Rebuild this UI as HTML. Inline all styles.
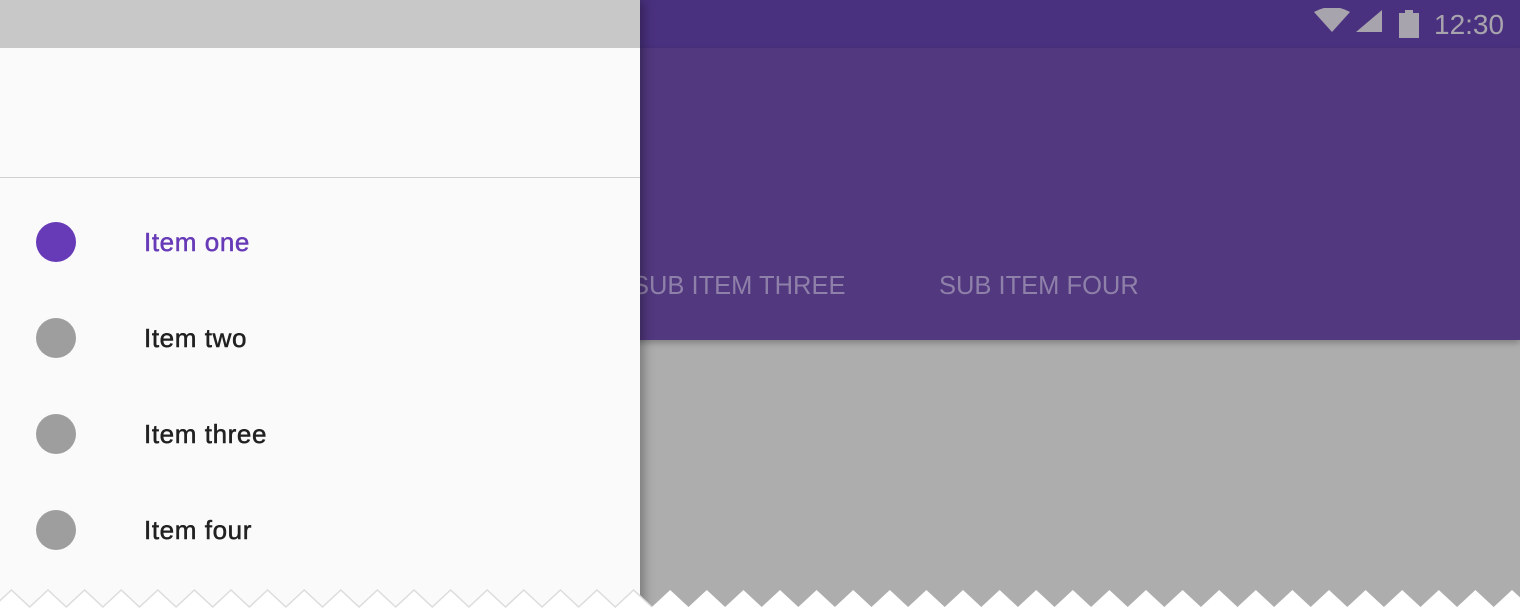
<!DOCTYPE html>
<html><head><style>
body{margin:0;width:1520px;height:610px;overflow:hidden;position:relative;background:#fff;font-family:"Liberation Sans",sans-serif}
.abs{position:absolute}
.item{position:absolute;left:144px;font-size:26px;color:#212121;line-height:30px;letter-spacing:0.6px;-webkit-text-stroke:0.5px currentColor}
.dot{position:absolute;left:36px;width:40px;height:40px;border-radius:50%;background:#9e9e9e}
</style></head><body>
<div class="abs" style="left:0;top:0;width:1520px;height:610px;background:#adadad"></div>
<div class="abs" style="left:0;top:0;width:1520px;height:48px;background:#4a317f"></div>
<div class="abs" style="left:0;top:48px;width:1520px;height:292px;background:#52387f;box-shadow:0 3px 6px rgba(0,0,0,.25)"></div>
<svg class="abs" style="left:1312px;top:8px" width="200" height="32">
<path d="M2 4 Q20 -6 38 4 L20 24 Z" fill="#a8a4ad"/>
<path d="M44 24 L70 24 L70 2 Z" fill="#a8a4ad"/>
<rect x="87" y="5" width="20" height="25" fill="#a8a4ad"/><rect x="93" y="2" width="8" height="4" fill="#a8a4ad"/>
<text x="122" y="26" font-family="Liberation Sans" font-size="28" fill="#a8a4ad">12:30</text>
</svg>
<div class="abs" style="left:632px;top:272px;font-size:25.5px;color:#8f80a9">SUB ITEM THREE</div>
<div class="abs" style="left:939px;top:272px;font-size:25.5px;color:#8f80a9">SUB ITEM FOUR</div>
<div class="abs" style="left:0;top:0;width:640px;height:610px;background:#fafafa;box-shadow:4px 0 10px rgba(0,0,0,.3)"></div>
<div class="abs" style="left:0;top:0;width:640px;height:48px;background:#c8c8c8"></div>
<div class="abs" style="left:0;top:177px;width:640px;height:1px;background:#d0d0d0"></div>
<div class="dot" style="top:222px;background:#673ab7"></div>
<div class="item" style="top:227px;color:#673ab7">Item one</div>
<div class="dot" style="top:318px"></div><div class="item" style="top:323px">Item two</div>
<div class="dot" style="top:414px"></div><div class="item" style="top:419px">Item three</div>
<div class="dot" style="top:510px"></div><div class="item" style="top:515px">Item four</div>
<svg class="abs" style="left:0;top:586px" width="1520" height="24">
<polygon id="z" fill="#fff" stroke="none" points=""/>
<polyline id="zl" fill="none" stroke="#dcdcdc" stroke-width="1.5" points=""/>
</svg>
<script>
var pts=[],lp=[];var p=36.6,o=597%36.6;
for(var x=o-p;x<1560;x+=p){pts.push(x+','+4);pts.push((x+p/2)+','+21);if(x<=650)lp.push(x+','+4,(x+p/2)+','+21);}
document.getElementById('z').setAttribute('points',pts.join(' ')+' 1560,24 -40,24');
document.getElementById('zl').setAttribute('points',lp.join(' '));
</script>
</body></html>
